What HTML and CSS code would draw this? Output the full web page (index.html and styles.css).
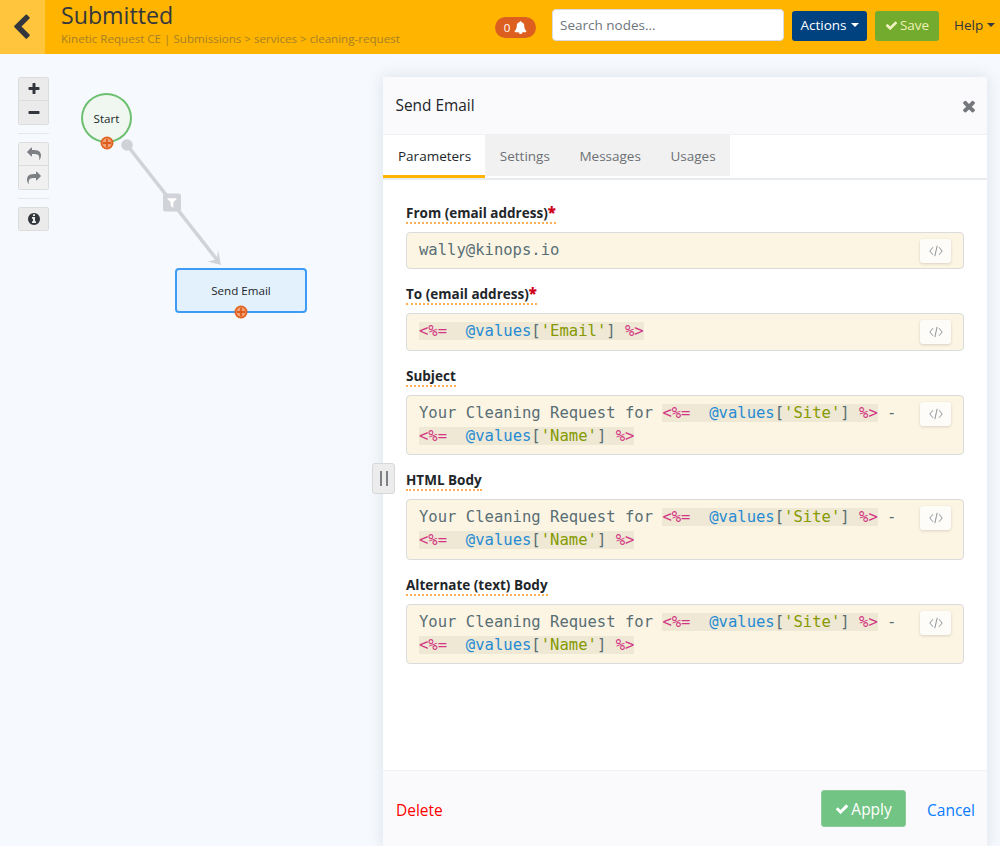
FILE: index.html
```html
<!DOCTYPE html>
<html lang="en">
<head>
<meta charset="utf-8">
<title>Submitted</title>
<link rel="stylesheet" href="styles.css">
</head>
<body>
<svg class="sprite" aria-hidden="true">
  <symbol id="i-back" viewBox="0 0 1792 1792"><path d="M1427 301l-531 531 531 531q19 19 19 45t-19 45l-166 166q-19 19-45 19t-45-19l-742-742q-19-19-19-45t19-45l742-742q19-19 45-19t45 19l166 166q19 19 19 45t-19 45z"/></symbol>
  <symbol id="i-bell" viewBox="0 0 1792 1792"><path d="M912 1696q0-16-16-16-59 0-101.5-42.5t-42.5-101.5q0-16-16-16t-16 16q0 73 51.5 124.500t124.500 51.500q16 0 16-16zm816-288q0 52-38 90t-90 38h-448q0 106-75 181t-181 75-181-75-75-181h-448q-52 0-90-38t-38-90q50-42 91-88t85-119.500 74.500-158.500 50-206 19.500-260q0-152 117-282.500t307-158.500q-8-19-8-39 0-40 28-68t68-28 68 28 28 68q0 20-8 39 190 28 307 158.500t117 282.500q0 139 19.500 260t50 206 74.500 158.500 85 119.500 91 88z"/></symbol>
  <symbol id="i-check" viewBox="0 0 1792 1792"><path d="M1671 566q0 40-28 68l-724 724-136 136q-28 28-68 28t-68-28l-136-136-362-362q-28-28-28-68t28-68l136-136q28-28 68-28t68 28l294 295 656-657q28-28 68-28t68 28l136 136q28 28 28 68z"/></symbol>
  <symbol id="i-plus" viewBox="0 0 1792 1792"><path d="M1600 736v192q0 40-28 68t-68 28h-416v416q0 40-28 68t-68 28h-192q-40 0-68-28t-28-68v-416h-416q-40 0-68-28t-28-68v-192q0-40 28-68t68-28h416v-416q0-40 28-68t68-28h192q40 0 68 28t28 68v416h416q40 0 68 28t28 68z"/></symbol>
  <symbol id="i-minus" viewBox="0 0 1792 1792"><path d="M1600 736v192q0 40-28 68t-68 28h-1216q-40 0-68-28t-28-68v-192q0-40 28-68t68-28h1216q40 0 68 28t28 68z"/></symbol>
  <symbol id="i-times" viewBox="0 0 1792 1792"><path d="M1490 1322q0 40-28 68l-136 136q-28 28-68 28t-68-28l-294-294-294 294q-28 28-68 28t-68-28l-136-136q-28-28-28-68t28-68l294-294-294-294q-28-28-28-68t28-68l136-136q28-28 68-28t68 28l294 294 294-294q28-28 68-28t68 28l136 136q28 28 28 68t-28 68l-294 294 294 294q28 28 28 68z"/></symbol>
  <symbol id="i-info" viewBox="0 0 1792 1792"><path d="M1152 1376v-160q0-14-9-23t-23-9h-96v-512q0-14-9-23t-23-9h-320q-14 0-23 9t-9 23v160q0 14 9 23t23 9h96v320h-96q-14 0-23 9t-9 23v160q0 14 9 23t23 9h448q14 0 23-9t9-23zm-128-896v-160q0-14-9-23t-23-9h-192q-14 0-23 9t-9 23v160q0 14 9 23t23 9h192q14 0 23-9t9-23zm640 416q0 209-103 385.500t-279.500 279.500-385.500 103-385.500-103-279.500-279.500-103-385.500 103-385.500 279.500-279.500 385.500-103 385.500 103 279.500 279.500 103 385.500z"/></symbol>
  <symbol id="i-undo" viewBox="0 0 1792 1792"><path d="M1792 1120q0 166-127 451-3 7-10.500 24t-13.500 30-13 22q-12 17-28 17-15 0-23.500-10t-8.500-25q0-9 2.500-26.500t2.500-23.500q5-68 5-123 0-101-17.500-181t-48.500-138.500-80-101-105.500-69.500-133-42.500-154-21.500-175.500-6h-224v256q0 26-19 45t-45 19-45-19l-512-512q-19-19-19-45t19-45l512-512q19-19 45-19t45 19 19 45v256h224q713 0 875 403 53 134 53 333z"/></symbol>
  <symbol id="i-redo" viewBox="0 0 1792 1792"><path d="M1792 640q0 26-19 45l-512 512q-19 19-45 19t-45-19-19-45v-256h-224q-98 0-175.500 6t-154 21.500-133 42.500-105.500 69.500-80 101-48.500 138.500-17.500 181q0 55 5 123 0 6 2.500 23.500t2.500 26.500q0 15-8.500 25t-23.500 10q-16 0-28-17-7-9-13-22t-13.500-30-10.500-24q-127-285-127-451 0-199 53-333 162-403 875-403h224v-256q0-26 19-45t45-19 45 19l512 512q19 19 19 45z"/></symbol>
  <symbol id="i-filter" viewBox="0 0 1792 1792"><path d="M1595 295q17 41-14 70l-493 493v742q0 42-39 59-13 5-25 5-27 0-45-19l-256-256q-19-19-19-45v-486l-493-493q-31-29-14-70 17-39 59-39h1280q42 0 59 39z"/></symbol>
  <symbol id="i-code" viewBox="0 0 14 12"><path d="M4 2.200 0.800 6 4 9.800M10 2.200 13.200 6 10 9.800M8.200 0.800 5.800 11.200" fill="none" stroke="currentColor" stroke-width="1"/></symbol>
  <symbol id="i-add" viewBox="0 0 14 14"><circle cx="7" cy="7" r="6.500" fill="#e0621f"/><circle cx="7" cy="7" r="4.700" fill="#f3a277"/><path d="M7 2.800v8.400M2.800 7h8.400" stroke="#dc5c1b" stroke-width="1.800" fill="none"/></symbol>
</svg>

<header class="topbar">
  <a class="back"><svg class="icon icon-back"><use href="#i-back"/></svg></a>
  <div class="titles">
    <h1>Submitted</h1>
    <p>Kinetic Request CE | Submissions &gt; services &gt; cleaning-request</p>
  </div>
  <div class="top-actions">
    <span class="badge">0 <svg class="icon icon-bell"><use href="#i-bell"/></svg></span>
    <input class="search" type="text" placeholder="Search nodes...">
    <button class="btn btn-navy">Actions<i class="caret"></i></button>
    <button class="btn btn-save"><svg class="icon icon-check"><use href="#i-check"/></svg>Save</button>
    <a class="help">Help<i class="caret"></i></a>
  </div>
</header>

<main class="workspace">
  <section class="canvas">
    <div class="tools">
      <div class="tool-group">
        <button class="tool"><svg class="icon"><use href="#i-plus"/></svg></button>
        <button class="tool"><svg class="icon"><use href="#i-minus"/></svg></button>
      </div>
      <hr class="tool-sep">
      <div class="tool-group muted">
        <button class="tool"><svg class="icon"><use href="#i-undo"/></svg></button>
        <button class="tool"><svg class="icon"><use href="#i-redo"/></svg></button>
      </div>
      <hr class="tool-sep">
      <div class="tool-group">
        <button class="tool"><svg class="icon"><use href="#i-info"/></svg></button>
      </div>
    </div>

    <svg class="links" width="383" height="792" viewBox="0 54 383 792">
      <line x1="127" y1="145" x2="218" y2="261" stroke="#d1d3d8" stroke-width="3.500"/>
      <circle cx="127" cy="145" r="5.800" fill="#cfd2d7"/>
      <path d="M221 265 l-13.500 -3.500 l9.500 -2 l1 -9.500 z" fill="#d1d3d8"/>
      <rect x="163" y="193.500" width="18" height="18" rx="2.500" fill="#d1d3d8"/>
      <use href="#i-filter" x="166" y="196.500" width="12" height="12" fill="#fff"/>
    </svg>

    <div class="node node-start">Start</div>
    <svg class="add add-start"><use href="#i-add"/></svg>
    <div class="node node-task">Send Email</div>
    <svg class="add add-task"><use href="#i-add"/></svg>
    <button class="handle"><i></i><i></i></button>
  </section>

  <section class="panel">
    <div class="panel-head">
      <h2>Send Email</h2>
      <svg class="icon icon-close"><use href="#i-times"/></svg>
    </div>
    <nav class="tabs">
      <a class="tab active">Parameters</a>
      <a class="tab">Settings</a>
      <a class="tab">Messages</a>
      <a class="tab">Usages</a>
    </nav>
    <form class="fields">
      <div class="field">
        <label>From (email address)<b>*</b></label>
        <div class="code"><div>wally@kinops.io</div><button class="code-btn" type="button"><svg><use href="#i-code"/></svg></button></div>
      </div>
      <div class="field">
        <label>To (email address)<b>*</b></label>
        <div class="code"><div><span class="erb"><em>&lt;%=</em>  <u>@values</u>[<s>'Email'</s>] <em>%&gt;</em></span></div><button class="code-btn" type="button"><svg><use href="#i-code"/></svg></button></div>
      </div>
      <div class="field">
        <label>Subject</label>
        <div class="code"><div>Your Cleaning Request for <span class="erb"><em>&lt;%=</em>  <u>@values</u>[<s>'Site'</s>] <em>%&gt;</em></span> -<br><span class="erb"><em>&lt;%=</em>  <u>@values</u>[<s>'Name'</s>] <em>%&gt;</em></span></div><button class="code-btn" type="button"><svg><use href="#i-code"/></svg></button></div>
      </div>
      <div class="field">
        <label>HTML Body</label>
        <div class="code"><div>Your Cleaning Request for <span class="erb"><em>&lt;%=</em>  <u>@values</u>[<s>'Site'</s>] <em>%&gt;</em></span> -<br><span class="erb"><em>&lt;%=</em>  <u>@values</u>[<s>'Name'</s>] <em>%&gt;</em></span></div><button class="code-btn" type="button"><svg><use href="#i-code"/></svg></button></div>
      </div>
      <div class="field">
        <label>Alternate (text) Body</label>
        <div class="code"><div>Your Cleaning Request for <span class="erb"><em>&lt;%=</em>  <u>@values</u>[<s>'Site'</s>] <em>%&gt;</em></span> -<br><span class="erb"><em>&lt;%=</em>  <u>@values</u>[<s>'Name'</s>] <em>%&gt;</em></span></div><button class="code-btn" type="button"><svg><use href="#i-code"/></svg></button></div>
      </div>
    </form>
    <footer class="panel-foot">
      <a class="delete">Delete</a>
      <div class="foot-right">
        <button class="btn-apply"><svg class="icon icon-check"><use href="#i-check"/></svg>Apply</button>
        <a class="cancel">Cancel</a>
      </div>
    </footer>
  </section>
</main>
</body>
</html>
```

FILE: styles.css
```css
* { box-sizing: border-box; }
html, body { margin: 0; height: 100%; }
body {
  height: 846px;
  overflow: hidden;
  display: flex;
  flex-direction: column;
  background: #f6f9fd;
  color: #212529;
  font-family: "Open Sans", sans-serif;
  font-size: 13.5px;
}
.sprite { display: none; }
.icon { display: inline-block; fill: currentColor; }

/* top bar */
.topbar {
  flex: 0 0 54px;
  display: flex;
  align-items: stretch;
  background: #ffb400;
}
.back {
  flex: 0 0 45px;
  display: flex;
  align-items: center;
  justify-content: center;
  background: #ffc53d;
  color: #33373d;
}
.icon-back { width: 27px; height: 27px; margin-left: -3px; }
.titles { flex: 1; padding-left: 16px; min-width: 0; }
.titles h1 {
  margin: 0;
  font-size: 23.2px;
  line-height: 30px;
  font-weight: 400;
  color: #33373d;
}
.titles p {
  margin: 0;
  font-size: 11.6px;
  line-height: 17px;
  color: #a5812a;
}
.top-actions { display: flex; align-items: center; margin-top: -2px; }
.badge {
  width: 41px;
  height: 21px;
  margin: 2px 16px 0 0;
  border-radius: 11px;
  background: #dd5f1f;
  color: #fff;
  font-size: 11.6px;
  line-height: 21px;
  text-align: center;
  white-space: nowrap;
}
.icon-bell { width: 13px; height: 13px; vertical-align: -2px; margin-left: 1px; }
.search {
  width: 232px;
  height: 32px;
  margin: -2px 8px 0 0;
  padding: 0 7px;
  border: 1px solid #d8dadd;
  border-radius: 4px;
  background: #fff;
  font: 13.5px "Open Sans", sans-serif;
  color: #495057;
}
.search::placeholder { color: #6c757d; opacity: 1; }
.btn {
  height: 30px;
  border: 0;
  border-radius: 3px;
  font: 13.5px "Open Sans", sans-serif;
  padding: 0 0 2px;
}
.btn-navy { width: 75px; margin-right: 8px; background: #00417f; color: #fff; }
.btn-save { width: 64px; margin-right: 15px; background: #72ab2e; color: #f0efb8; }
.btn-save .icon-check { width: 13px; height: 13px; vertical-align: -2px; margin-right: 2px; color: #f2f2c0; }
.caret {
  display: inline-block;
  margin-left: 4px;
  vertical-align: 3px;
  border-top: 4px solid currentColor;
  border-left: 4px solid transparent;
  border-right: 4px solid transparent;
}
.help { width: 46px; margin-top: -2px; color: #33373d; white-space: nowrap; }

/* workspace */
.workspace { flex: 1; display: flex; min-height: 0; }
.canvas { position: relative; flex: 0 0 383px; }
.tools { position: absolute; left: 18px; top: 23px; width: 31px; }
.tool-group {
  display: flex;
  flex-direction: column;
  border-radius: 3px;
  overflow: hidden;
}
.tool {
  height: 24px;
  padding: 0;
  border: 1px solid #dcdcdc;
  background: #ebebeb;
  color: #33373d;
  display: flex;
  align-items: center;
  justify-content: center;
}
.tool + .tool { border-top: 0; }
.tool .icon { width: 14px; height: 14px; }
.muted .tool { background: #f0f0f0; color: #7c7f84; }
.tool-sep { margin: 8px 0; border: 0; border-top: 1px solid #e6e8ea; }
.links { position: absolute; left: 0; top: 0; }
.node {
  position: absolute;
  display: flex;
  align-items: center;
  justify-content: center;
  font-size: 11.6px;
  color: #22262a;
}
.node-start {
  left: 81px;
  top: 39px;
  width: 51px;
  height: 50px;
  border: 2px solid #6cc070;
  border-radius: 50%;
  background: #eff7f0;
}
.node-task {
  left: 175px;
  top: 214px;
  width: 132px;
  height: 45px;
  border: 2px solid #3f9cf6;
  border-radius: 4px;
  background: #e3f1fd;
}
.add { position: absolute; width: 14px; height: 14px; }
.add-start { left: 100px; top: 82px; }
.add-task { left: 234px; top: 251px; }
.handle {
  position: absolute;
  left: 372px;
  top: 409px;
  z-index: 2;
  width: 23px;
  height: 31px;
  padding: 0;
  border: 1px solid #d6d8da;
  border-radius: 3px;
  background: #ececec;
  display: flex;
  align-items: center;
  justify-content: center;
  gap: 4px;
}
.handle i { width: 2px; height: 15px; background: #7c7f84; }

/* panel */
.panel {
  flex: 0 0 604px;
  margin-top: 23px;
  display: flex;
  flex-direction: column;
  background: #fff;
  box-shadow: 0 0 14px rgba(120, 140, 165, 0.22);
}
.panel-head {
  flex: 0 0 58px;
  display: flex;
  align-items: center;
  justify-content: space-between;
  padding: 0 9px 0 12.500px;
  background: #fafafc;
  border-bottom: 1px solid #f0f1f4;
}
.panel-head h2 { margin: 0; font-size: 15.4px; font-weight: 400; color: #22262a; }
.icon-close { width: 18px; height: 18px; color: #74777b; }
.tabs {
  flex: 0 0 44px;
  display: flex;
  align-items: flex-start;
  border-bottom: 2px solid #e9ecef;
}
.tab {
  height: 41px;
  padding: 1px 14.800px 0;
  display: flex;
  align-items: center;
  background: #f1f1f1;
  color: #6c7075;
  white-space: nowrap;
}
.tab.active {
  height: 43px;
  width: 102px;
  padding: 1px 14px 0 15px;
  background: #fff;
  color: #22262a;
  border-bottom: 3px solid #ffb400;
}
.fields { flex: 1; padding: 25px 23px 0; min-height: 0; }
.field { margin-bottom: 17px; }
.field label {
  display: table;
  height: 19px;
  margin-bottom: 8px;
  font-size: 13.5px;
  line-height: 17px;
  font-weight: 700;
  color: #22262a;
  border-bottom: 2px dotted #ffb055;
}
.field label b { color: #d0021b; font-size: 15px; line-height: 0; }
.code {
  position: relative;
  padding: 6px 46px 6px 12px;
  border: 1px solid #d9dbdd;
  border-radius: 4px;
  background: #fdf5e3;
  font-family: "DejaVu Sans Mono", monospace;
  font-size: 15.55px;
  line-height: 23.250px;
  color: #586e75;
  white-space: pre;
}
.erb { background: #eee8d5; }
.erb em { font-style: normal; color: #d33682; }
.erb u { text-decoration: none; color: #268bd2; }
.erb s { text-decoration: none; color: #859900; }
.code-btn {
  position: absolute;
  right: 12px;
  top: 6px;
  width: 31px;
  height: 24px;
  padding: 0;
  border: 0;
  border-radius: 3px;
  background: #fdfcf9;
  color: #8b9499;
  box-shadow: 0 1px 3px rgba(0, 0, 0, 0.15);
  display: flex;
  align-items: center;
  justify-content: center;
}
.code-btn svg { width: 14px; height: 12px; }
.panel-foot {
  flex: 0 0 76px;
  display: flex;
  align-items: center;
  justify-content: space-between;
  padding: 0 12px 0 13px;
  background: #fafafc;
  border-top: 1px solid #f0f1f4;
  font-size: 15.5px;
}
.delete { color: #f00; margin-top: 2px; }
.foot-right { display: flex; align-items: center; gap: 21px; }
.btn-apply {
  width: 85px;
  height: 37px;
  padding: 0;
  border: 1px solid #8ccb9a;
  border-radius: 3px;
  background: #72c484;
  color: #fff;
  font: 15.5px "Open Sans", sans-serif;
}
.btn-apply .icon-check { width: 14px; height: 14px; vertical-align: -1px; margin-right: 2px; }
.cancel { color: #0a7cff; margin-top: 2px; }
```
